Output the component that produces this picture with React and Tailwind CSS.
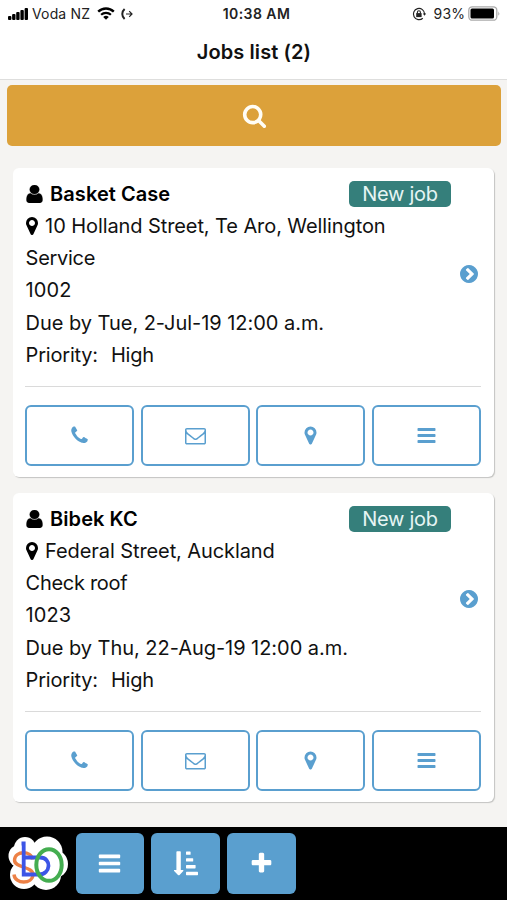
const jobs = [
  {
    name: "Basket Case",
    address: "10 Holland Street, Te Aro, Wellington",
    type: "Service",
    number: "1002",
    due: "Due by Tue, 2-Jul-19 12:00 a.m.",
    priority: "High",
  },
  {
    name: "Bibek KC",
    address: "Federal Street, Auckland",
    type: "Check roof",
    number: "1023",
    due: "Due by Thu, 22-Aug-19 12:00 a.m.",
    priority: "High",
  },
];

const icons = {
  user: "M1536 1399q0 109-62.5 187t-150.5 78h-854q-88 0-150.5-78t-62.5-187q0-85 8.5-160.5t31.5-152 58.5-131 94-89 134.5-34.5q131 128 313 128t313-128q76 0 134.5 34.5t94 89 58.5 131 31.5 152 8.5 160.5zm-256-887q0 159-112.5 271.5t-271.5 112.5-271.5-112.5-112.5-271.5 112.5-271.5 271.5-112.5 271.5 112.5 112.5 271.5z",
  marker:
    "M1152 640q0-106-75-181t-181-75-181 75-75 181 75 181 181 75 181-75 75-181zm256 0q0 109-33 179l-364 774q-16 33-47.5 52t-67.5 19-67.5-19-46.5-52l-365-774q-33-70-33-179 0-212 150-362t362-150 362 150 150 362z",
  phone:
    "M1600 1240q0 27-10 70.5t-21 68.5q-21 50-122 106-94 51-186 51-27 0-53-3.5t-57.5-12.5-47-14.5-55.5-20.5-49-18q-98-35-175-83-127-79-264-216t-216-264q-48-77-83-175-3-9-18-49t-20.5-55.5-14.5-47-12.5-57.5-3.5-53q0-92 51-186 56-101 106-122 25-11 68.5-21t70.5-10q14 0 21 3 18 6 53 76 11 19 30 54t35 63.5 31 53.5q3 4 17.5 25t21.5 35.5 7 28.5q0 20-28.5 50t-62 55-62 53-28.5 46q0 9 5 22.5t8.5 20.5 14 24 11.5 19q76 137 174 235t235 174q2 1 19 11.5t24 14 20.5 8.5 22.5 5q18 0 46-28.5t53-62 55-62 50-28.5q14 0 28.5 7t35.5 21.5 25 17.5q25 15 53.5 31t63.5 35 54 30q70 35 76 53 3 7 3 21z",
  envelope:
    "M1664 1504v-768q-32 36-69 66-268 206-426 338-51 43-83 67t-86.5 48.5-102.5 24.5h-2q-48 0-102.5-24.5t-86.5-48.5-83-67q-158-132-426-338-37-30-69-66v768q0 13 9.5 22.5t22.5 9.5h1472q13 0 22.5-9.5t9.5-22.5zm0-1051v-24.5l-.5-13-3-12.5-5.5-9-9-7.5-14-2.5h-1472q-13 0-22.5 9.5t-9.5 22.5q0 168 147 284 193 152 401 317 6 5 35 29.5t46 37.5 44.5 31.5 50.5 27.5 43 9h2q20 0 43-9t50.5-27.5 44.5-31.5 46-37.5 35-29.5q208-165 401-317 54-43 100.5-115.5t46.5-131.5zm128-37v1088q0 66-47 113t-113 47h-1472q-66 0-113-47t-47-113v-1088q0-66 47-113t113-47h1472q66 0 113 47t47 113z",
  search:
    "M1216 832q0-185-131.5-316.5t-316.5-131.5-316.5 131.5-131.5 316.5 131.5 316.5 316.5 131.5 316.5-131.5 131.5-316.5zm512 832q0 52-38 90t-90 38q-54 0-90-38l-343-342q-179 124-399 124-143 0-273.5-55.5t-225-150-150-225-55.5-273.5 55.5-273.5 150-225 225-150 273.5-55.5 273.5 55.5 225 150 150 225 55.5 273.5q0 220-124 399l343 343q37 37 37 90z",
  bars: "M1664 1344v128q0 26-19 45t-45 19h-1408q-26 0-45-19t-19-45v-128q0-26 19-45t45-19h1408q26 0 45 19t19 45zm0-512v128q0 26-19 45t-45 19h-1408q-26 0-45-19t-19-45v-128q0-26 19-45t45-19h1408q26 0 45 19t19 45zm0-512v128q0 26-19 45t-45 19h-1408q-26 0-45-19t-19-45v-128q0-26 19-45t45-19h1408q26 0 45 19t19 45z",
  chevron:
    "M845 1395l454-454q19-19 19-45t-19-45l-454-454q-19-19-45-19t-45 19l-102 102q-19 19-19 45t19 45l307 307-307 307q-19 19-19 45t19 45l102 102q19 19 45 19t45-19zm819-499q0 209-103 385.5t-279.5 279.5-385.5 103-385.5-103-279.5-279.5-103-385.5 103-385.5 279.5-279.5 385.5-103 385.5 103 279.5 279.5 103 385.5z",
  plus: "M1600 736v192q0 40-28 68t-68 28h-416v416q0 40-28 68t-68 28h-192q-40 0-68-28t-28-68v-416h-416q-40 0-68-28t-28-68v-192q0-40 28-68t68-28h416v-416q0-40 28-68t68-28h192q40 0 68 28t28 68v416h416q40 0 68 28t28 68z",
};

const Icon = ({ name, className, viewBox = "0 0 1792 1792" }) => (
  <svg viewBox={viewBox} fill="currentColor" className={className}>
    <path d={icons[name]} />
  </svg>
);

const StatusBar = () => (
  <div className="flex h-[27px] items-center justify-between pl-2 pr-[7px] text-[14px] text-[#222]">
    <div className="flex w-[190px] items-center">
      <svg viewBox="0 0 20 12" className="h-3 w-5" fill="#000">
        <rect x="0" y="8" width="3.4" height="4" rx="1" />
        <rect x="4.1" y="6" width="3.4" height="6" rx="1" />
        <rect x="8.2" y="4" width="3.4" height="8" rx="1" />
        <rect x="12.4" y="2" width="3.4" height="10" rx="1" />
        <rect x="16.6" y="0" width="3.4" height="12" rx="1" />
      </svg>
      <span className="ml-1 whitespace-nowrap tracking-[0.15px]">Voda NZ</span>
      <svg viewBox="0 0 18 13" className="ml-[7px] h-[13px] w-[18px]" fill="none" stroke="#000">
        <path d="M1.2 4.7a11.2 11.2 0 0 1 15.6 0" strokeWidth="2.4" />
        <path d="M4.1 7.8a7.1 7.1 0 0 1 9.8 0" strokeWidth="2.2" />
        <path d="M9 12.8 6.2 10.1a4 4 0 0 1 5.6 0Z" fill="#000" stroke="none" />
      </svg>
      <svg viewBox="0 0 12 12" className="ml-[6px] h-3 w-3" fill="none" stroke="#222">
        <path d="M3.6 1C.5 3.7.5 8.3 3.6 11" strokeWidth="2" />
        <path d="M5 6h6M8.2 3.2 11 6 8.2 8.8" strokeWidth="1.2" />
      </svg>
    </div>
    <span className="ml-[5px] whitespace-nowrap font-semibold tracking-[0.45px]">10:38 AM</span>
    <div className="flex w-[190px] items-center justify-end">
      <svg viewBox="0 0 14 14" className="h-[14px] w-[14px]" fill="none" stroke="#222">
        <path d="M10.8 11.2A5.6 5.6 0 1 1 12.6 7" strokeWidth="1.2" />
        <path d="M10.8 6.4h3.4l-1.7 2.4z" fill="#222" stroke="none" />
        <rect x="4.2" y="6.1" width="5.4" height="4" fill="#222" stroke="none" />
        <path d="M5.4 6.5V5.2a1.5 1.5 0 0 1 3 0v1.3" strokeWidth="1.1" />
      </svg>
      <span className="ml-[8px] tracking-[0.1px]">93%</span>
      <svg viewBox="0 0 32 15" className="ml-[3px] h-[15px] w-8">
        <rect x=".8" y=".8" width="28" height="13.4" rx="3.5" fill="#fff" stroke="#aaa" strokeWidth="1.3" />
        <rect x="2.5" y="2.5" width="23.5" height="10" rx="1.5" />
        <path d="M30.5 5.2q1.5 2.3 0 4.6z" fill="#888" />
      </svg>
    </div>
  </div>
);

const actions = [
  { name: "phone" },
  { name: "envelope" },
  { name: "marker" },
  { name: "bars" },
];

const JobCard = ({ job }) => (
  <div className="mx-[13px] h-[309px] rounded-md bg-white pl-3 pr-[13px] pt-[10px] shadow-[1px_1px_1px_0px_#c4c4c2]">
    <div className="flex h-[194px] pl-[0.6px] text-[20px] leading-[32.3px] tracking-[-0.09px] text-[#111]">
      <div className="flex-1 whitespace-nowrap">
        <div className="flex h-[32.3px] items-center text-black">
          <svg
            viewBox="220 128 1352 1536"
            preserveAspectRatio="none"
            className="mr-[7.5px] h-[18px] w-[17px]"
            fill="currentColor"
            stroke="currentColor"
            strokeWidth="20"
          >
            <path d={icons.user} />
          </svg>
          <span className="font-semibold tracking-[0.05px]">{job.name}</span>
          <span className="ml-auto mr-[5px] flex h-[26px] w-[102px] items-center justify-center rounded-[5px] bg-[#357f7b] text-[#e6f5f4] tracking-[-0.25px]">
            New job
          </span>
        </div>
        <div className="flex h-[31.9px] items-center">
          <Icon name="marker" viewBox="384 128 1024 1536" className="mr-[7.5px] h-[18px] w-3 text-black" />
          <span>{job.address}</span>
        </div>
        <div className="tracking-[-0.3px]">{job.type}</div>
        <div className="tracking-[0.1px]">{job.number}</div>
        <div className="tracking-[-0.04px]">{job.due}</div>
        <div className="pt-[0.4px] tracking-[-0.2px]">
          Priority:<span className="ml-[13px]">{job.priority}</span>
        </div>
      </div>
      <div className="flex w-[25px] items-center justify-center pb-[2px]">
        <Icon name="chevron" viewBox="128 128 1536 1536" className="h-[18px] w-[18px] text-[#5a9fcf]" />
      </div>
    </div>
    <div className="mt-[13.5px] h-px bg-[#dadada]" />
    <div className="mt-[18.5px] flex gap-[6.5px]">
      {actions.map((action) => (
        <button
          key={action.name}
          className="flex h-[61px] flex-1 items-center justify-center rounded-md border-[2.5px] border-[#5a9fcf] text-[#5a9fcf]"
        >
          <Icon name={action.name} className="h-[21px] w-[21px]" />
        </button>
      ))}
    </div>
  </div>
);

// three interlocking strokes on a white cloud
const Logo = () => (
  <svg viewBox="0 0 62 60" className="h-[60px] w-[62px]" fill="none">
    <g fill="#fff">
      <circle cx="18" cy="15" r="11" />
      <circle cx="13" cy="23" r="11.5" />
      <circle cx="40" cy="19" r="15.5" />
      <circle cx="17" cy="42" r="14" />
      <circle cx="39" cy="42" r="15" />
      <circle cx="46.5" cy="31" r="14.5" />
      <circle cx="28" cy="32" r="17" />
    </g>
    <path
      d="M25.5 26.5C24.5 17.5 8 17.5 7.5 27c0 8.5 18.5 6 18.500 14.500C25.500 51.500 8 51.500 7 41.500"
      stroke="#ed8146"
      strokeWidth="3.4"
    />
    <path
      d="M14.500 10.500h2.200V41.500H32c12 0 13-17 1-17H16.700"
      stroke="#3c55e6"
      strokeWidth="3.8"
    />
    <ellipse cx="42" cy="32" rx="12.700" ry="15.800" stroke="#44ad50" strokeWidth="4" />
  </svg>
);

const FooterButton = ({ children }) => (
  <button className="flex h-[61px] w-[68.7px] items-center justify-center rounded-md bg-[#5a9fcf] text-white">
    {children}
  </button>
);

const App = () => {
  return (
    <div className="flex h-[900px] w-[507px] flex-col overflow-hidden bg-[#f5f4f2] font-['Inter','Liberation_Sans',sans-serif]">
      <header className="h-[79.5px] border-b-[1.5px] border-[#dededd] bg-white">
        <StatusBar />
        <h1 className="pl-px pt-px text-center text-[20px] font-semibold leading-[49px] tracking-[0.08px] text-[#111]">
          Jobs list ({jobs.length})
        </h1>
      </header>
      <main className="flex flex-1 flex-col">
        <button className="ml-[7px] mr-[6px] mt-[5.5px] flex h-[61px] shrink-0 items-center justify-center rounded-[5px] bg-[#dca13a] text-[#fffdf5]">
          <Icon name="search" className="h-[25px] w-[25px]" />
        </button>
        <div className="mt-[22px] flex flex-col gap-4">
          {jobs.map((job) => (
            <JobCard key={job.number} job={job} />
          ))}
        </div>
      </main>
      <footer className="flex h-[73.5px] items-start gap-[7px] bg-black pl-[6.5px] pt-[6.5px]">
        <Logo />
        <FooterButton>
          <Icon name="bars" className="h-[25px] w-[25px]" />
        </FooterButton>
        <FooterButton>
          <svg viewBox="0 0 24 25" className="h-[25px] w-6" fill="currentColor">
            <path d="M2.4 1q0-.8.8-.8h2.8q.8 0 .8.8v18h2q1.2 0 .5 1L5.6 24q-.8.6-1.6 0L.1 20q-.7-1 .5-1h1.8z" />
            <rect x="12" y="0.4" width="4.6" height="3.4" rx=".6" />
            <rect x="12" y="7.2" width="7.2" height="3.4" rx=".6" />
            <rect x="12" y="14" width="9.6" height="3.4" rx=".6" />
            <rect x="12" y="20.8" width="12" height="3.4" rx=".6" />
          </svg>
        </FooterButton>
        <FooterButton>
          <Icon name="plus" className="h-[25px] w-[25px]" />
        </FooterButton>
      </footer>
    </div>
  );
};

export default App;
